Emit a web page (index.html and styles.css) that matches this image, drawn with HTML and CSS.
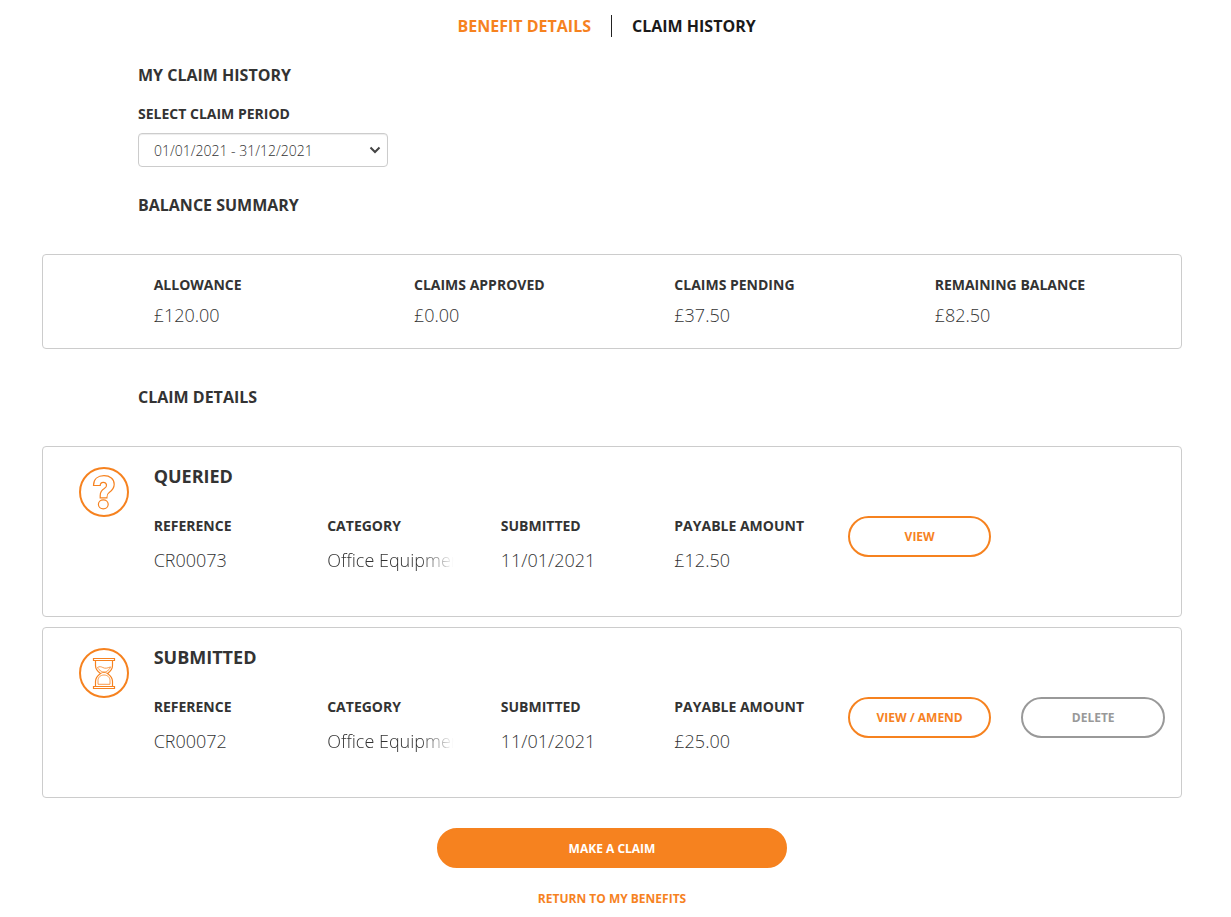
FILE: index.html
```html
<!DOCTYPE html>
<html lang="en">
<head>
<meta charset="utf-8">
<meta name="viewport" content="width=device-width, initial-scale=1">
<title>Claim History</title>
<link rel="stylesheet" href="styles.css">
</head>
<body>
<div class="page">
  <nav class="tabs" aria-label="Benefit sections">
    <div class="tab-cell tab-cell-left"><a class="tab tab-orange" href="#benefit">BENEFIT DETAILS</a></div>
    <div class="tab-cell"><a class="tab" href="#history" aria-current="page">CLAIM HISTORY</a></div>
  </nav>
  <main>
    <section class="indent">
      <h1 class="heading">MY CLAIM HISTORY</h1>
      <label class="label period-label" for="period">SELECT CLAIM PERIOD</label>
      <select class="period" id="period">
        <option>01/01/2021 - 31/12/2021</option>
      </select>
    </section>

    <div class="indent"><h2 class="heading heading-balance">BALANCE SUMMARY</h2></div>
    <section class="card summary">
      <dl class="summary-grid">
        <div class="cell"><dt class="label">ALLOWANCE</dt><dd class="value">£120.00</dd></div>
        <div class="cell"><dt class="label">CLAIMS APPROVED</dt><dd class="value">£0.00</dd></div>
        <div class="cell"><dt class="label">CLAIMS PENDING</dt><dd class="value">£37.50</dd></div>
        <div class="cell"><dt class="label">REMAINING BALANCE</dt><dd class="value">£82.50</dd></div>
      </dl>
    </section>

    <div class="indent"><h2 class="heading heading-details">CLAIM DETAILS</h2></div>
    <article class="card claim">
      <div class="status">
        <svg class="status-icon" viewBox="0 0 50 50" aria-hidden="true">
          <circle cx="25" cy="25" r="24" stroke-width="2"/>
          <path d="M14.5 18.5C14.5 12 19 8.7 25 8.7c6 0 10.2 3.2 10.2 8.6 0 4-2.2 6.3-5 8.3-2 1.4-2.3 2-2.3 5.3h-6.700v-2.500c0-3.200 1.300-5 4.100-6.800 1.900-1.300 2.400-2.300 2.200-3.800-.3-1.700-1.500-2.500-3.200-2.500-2.500 0-3.100 1.200-3.100 3.200z"/>
          <ellipse cx="24.300" cy="37.300" rx="4.900" ry="4.500"/>
        </svg>
      </div>
      <div>
        <h3 class="claim-title">QUERIED</h3>
        <dl class="claim-grid">
          <div class="cell"><dt class="label">REFERENCE</dt><dd class="value">CR00073</dd></div>
          <div class="cell"><dt class="label">CATEGORY</dt><dd class="value fade">Office Equipment</dd></div>
          <div class="cell"><dt class="label">SUBMITTED</dt><dd class="value">11/01/2021</dd></div>
          <div class="cell"><dt class="label">PAYABLE AMOUNT</dt><dd class="value">£12.50</dd></div>
          <div class="cell action"><dd><button class="button" type="button">VIEW</button></dd></div>
        </dl>
      </div>
    </article>

    <article class="card claim">
      <div class="status">
        <svg class="status-icon" viewBox="0 0 50 50" aria-hidden="true">
          <circle cx="25" cy="25" r="24" stroke-width="2"/>
          <path d="M14.500 10.500h21v2h-21zM14.500 38.500h21v2h-21z"/>
          <path d="M16.500 12.500v5c0 3.500 1.500 5.500 5 8-3.500 2.500-5 4.500-5 8v5M33.500 12.500v5c0 3.500-1.500 5.500-5 8 3.500 2.500 5 4.500 5 8v5"/>
          <path d="M18.500 19.500c2-1.300 3.700-.8 5.300 0 2.200 1.200 4.300.8 7.700-.6-.6 2-1.800 3.200-3.700 4.400-1.600 1-3.900 1-5.500 0-1.800-1.100-3-2.200-3.800-3.800z" stroke-width=".8"/>
          <path d="M19 36.300v-4c0-3 2.600-5.300 6-5.300s6 2.300 6 5.300v4z" stroke-width=".8"/>
          <path d="M21.500 25.500c2-1.500 5-1.500 7 0" stroke-width=".8"/>
        </svg>
      </div>
      <div>
        <h3 class="claim-title">SUBMITTED</h3>
        <dl class="claim-grid">
          <div class="cell"><dt class="label">REFERENCE</dt><dd class="value">CR00072</dd></div>
          <div class="cell"><dt class="label">CATEGORY</dt><dd class="value fade">Office Equipment</dd></div>
          <div class="cell"><dt class="label">SUBMITTED</dt><dd class="value">11/01/2021</dd></div>
          <div class="cell"><dt class="label">PAYABLE AMOUNT</dt><dd class="value">£25.00</dd></div>
          <div class="cell action"><dd><button class="button" type="button">VIEW / AMEND</button></dd></div>
          <div class="cell action"><dd><button class="button button-grey" type="button">DELETE</button></dd></div>
        </dl>
      </div>
    </article>

    <div class="footer">
      <button class="button button-solid" type="button">MAKE A CLAIM</button>
      <a class="return" href="#benefits">RETURN TO MY BENEFITS</a>
    </div>
  </main>
</div>
</body>
</html>
```

FILE: styles.css
```css
*, *::before, *::after { box-sizing: border-box; }

body {
  margin: 0;
  padding: 0 49px 0 42px;
  background: #fff;
  color: #333;
  font-family: "Open Sans", "Noto Sans", sans-serif;
  font-size: 14px;
  line-height: 20px;
}

h1, h2, h3, dl, dd { margin: 0; }

.page { max-width: 1140px; margin: 0 auto; }

.tabs {
  display: grid;
  grid-template-columns: 1fr 1fr;
  padding-top: 15px;
}
.tab-cell {
  display: flex;
  height: 22px;
  padding-left: 20px;
  line-height: 22px;
}
.tab-cell-left {
  justify-content: flex-end;
  padding: 0 20px 0 0;
  border-right: 1px solid #222;
}
.tab {
  color: #1a1a1a;
  font-size: 16px;
  font-weight: 700;
  text-decoration: none;
}
.tab-orange { color: #f6821f; }

.indent { padding-left: 96px; }

.heading {
  font-size: 16px;
  font-weight: 700;
  line-height: 22px;
  margin-top: 27px;
}
.label {
  display: block;
  font-size: 14px;
  font-weight: 700;
}
.period-label { margin: 18px 0 9px; }
.period {
  display: block;
  width: 250px;
  height: 34px;
  padding: 7px 16px 5px 15px;
  border: 1px solid #ccc;
  border-radius: 4px;
  appearance: none;
  background: #fff url("data:image/svg+xml,%3Csvg xmlns='http://www.w3.org/2000/svg' width='12' height='8' fill='none' stroke='%23444' stroke-width='2'%3E%3Cpath d='M1.500 1.500 6 6l4.500-4.500'/%3E%3C/svg%3E") no-repeat right 6px center;
  color: #333;
  font: 300 14px/20px "Open Sans", "Noto Sans", sans-serif;
  box-shadow: inset 0 1px 1px rgba(0, 0, 0, .075);
}
.heading-balance { margin-bottom: 38px; }
.heading-details { margin: 37px 0 38px; }

.card {
  display: grid;
  grid-template-columns: 1fr 11fr;
  border: 1px solid #ccc;
  border-radius: 4px;
}
.summary { padding: 20px 1px; }
.summary-grid {
  grid-column: 2;
  display: grid;
  grid-template-columns: repeat(4, 1fr);
}
.cell { padding: 0 15px; min-width: 0; }
.value {
  font-size: 18px;
  font-weight: 300;
  line-height: 25px;
  white-space: nowrap;
}
.summary .value { margin: 8px 0 0; }

.claim {
  padding: 20px 1px 43px;
  margin-bottom: 10px;
}
.status { display: flex; justify-content: flex-end; padding-right: 10px; }
.status-icon {
  width: 50px;
  height: 50px;
  fill: none;
  stroke: #f6821f;
  stroke-width: 1.2;
}
.claim-title {
  padding-left: 15px;
  font-size: 18px;
  font-weight: 700;
  line-height: 18px;
}
.claim-grid {
  display: grid;
  grid-template-columns: repeat(6, 1fr);
  margin-top: 31px;
}
.claim .value { margin-top: 12px; }
.fade {
  overflow: hidden;
  -webkit-mask-image: linear-gradient(to right, #000 65%, transparent 88%);
  mask-image: linear-gradient(to right, #000 65%, transparent 88%);
}

.button {
  display: block;
  width: 100%;
  height: 41px;
  padding: 0 12px;
  border: 2px solid #f6821f;
  border-radius: 21px;
  background: #fff;
  color: #f6821f;
  font: 700 12px/20px "Open Sans", "Noto Sans", sans-serif;
}
.button-grey { border-color: #999; color: #999; }
.button-solid {
  width: 350px;
  height: 40px;
  padding-top: 2px;
  background: #f6821f;
  color: #fff;
}

.footer {
  display: flex;
  flex-direction: column;
  align-items: center;
  gap: 21px;
  padding-top: 20px;
}
.return {
  color: #f6821f;
  font-size: 12px;
  font-weight: 700;
  text-decoration: none;
}
```
